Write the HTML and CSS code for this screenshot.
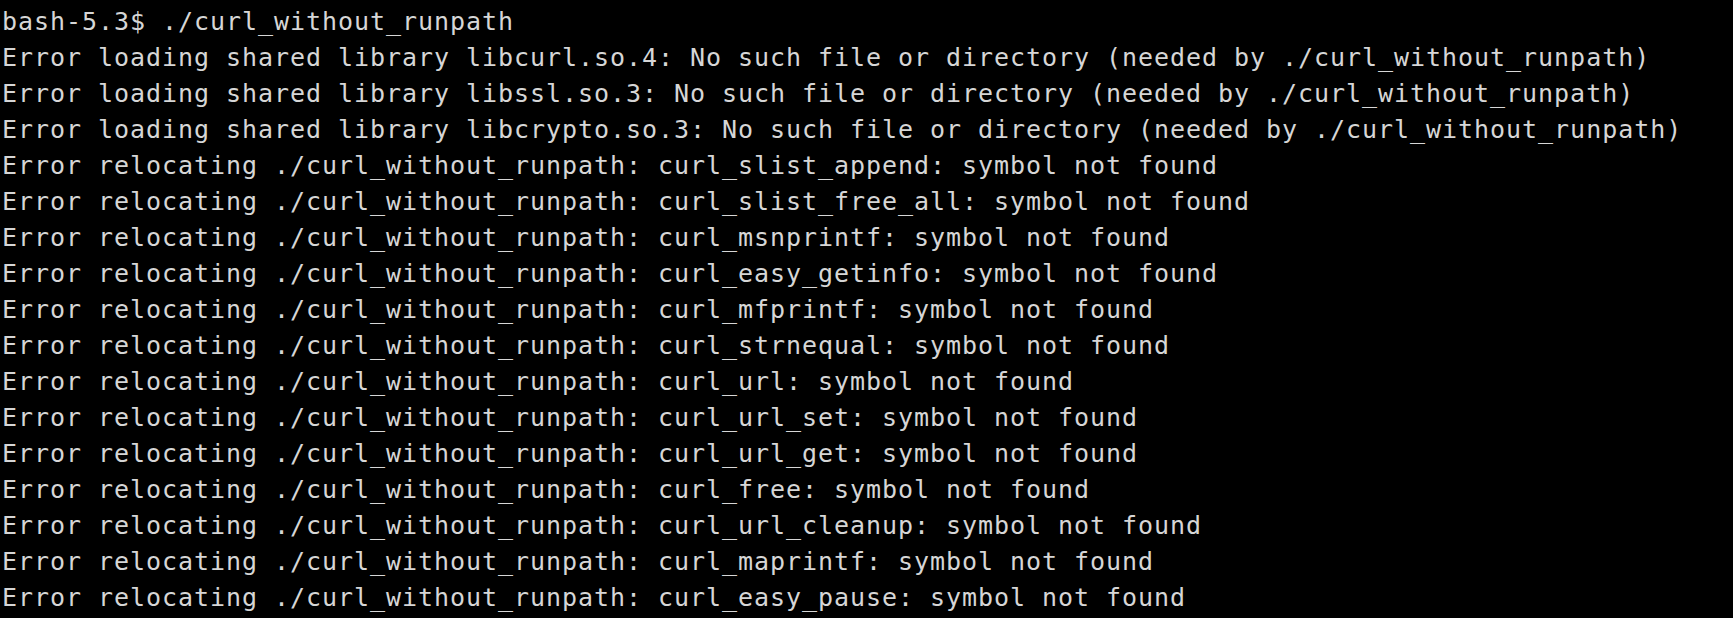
FILE: index.html
```html
<!DOCTYPE html>
<html>
<head>
<meta charset="utf-8">
<link rel="stylesheet" href="styles.css">
</head>
<body>
<pre class="term">bash-5.3$ ./curl_without_runpath
Error loading shared library libcurl.so.4: No such file or directory (needed by ./curl_without_runpath)
Error loading shared library libssl.so.3: No such file or directory (needed by ./curl_without_runpath)
Error loading shared library libcrypto.so.3: No such file or directory (needed by ./curl_without_runpath)
Error relocating ./curl_without_runpath: curl_slist_append: symbol not found
Error relocating ./curl_without_runpath: curl_slist_free_all: symbol not found
Error relocating ./curl_without_runpath: curl_msnprintf: symbol not found
Error relocating ./curl_without_runpath: curl_easy_getinfo: symbol not found
Error relocating ./curl_without_runpath: curl_mfprintf: symbol not found
Error relocating ./curl_without_runpath: curl_strnequal: symbol not found
Error relocating ./curl_without_runpath: curl_url: symbol not found
Error relocating ./curl_without_runpath: curl_url_set: symbol not found
Error relocating ./curl_without_runpath: curl_url_get: symbol not found
Error relocating ./curl_without_runpath: curl_free: symbol not found
Error relocating ./curl_without_runpath: curl_url_cleanup: symbol not found
Error relocating ./curl_without_runpath: curl_maprintf: symbol not found
Error relocating ./curl_without_runpath: curl_easy_pause: symbol not found</pre>
</body>
</html>
```
FILE: styles.css
```css
html, body {
  margin: 0;
  padding: 0;
  background: #000;
  height: 100%;
  overflow: hidden;
}
.term {
  margin: 0;
  padding: 3.5px 0 0 2px;
  font-family: "DejaVu Sans Mono", "Liberation Mono", monospace;
  font-size: 25px;
  letter-spacing: 0.95px;
  line-height: 36px;
  color: #d6d6d6;
  white-space: pre;
}
```
